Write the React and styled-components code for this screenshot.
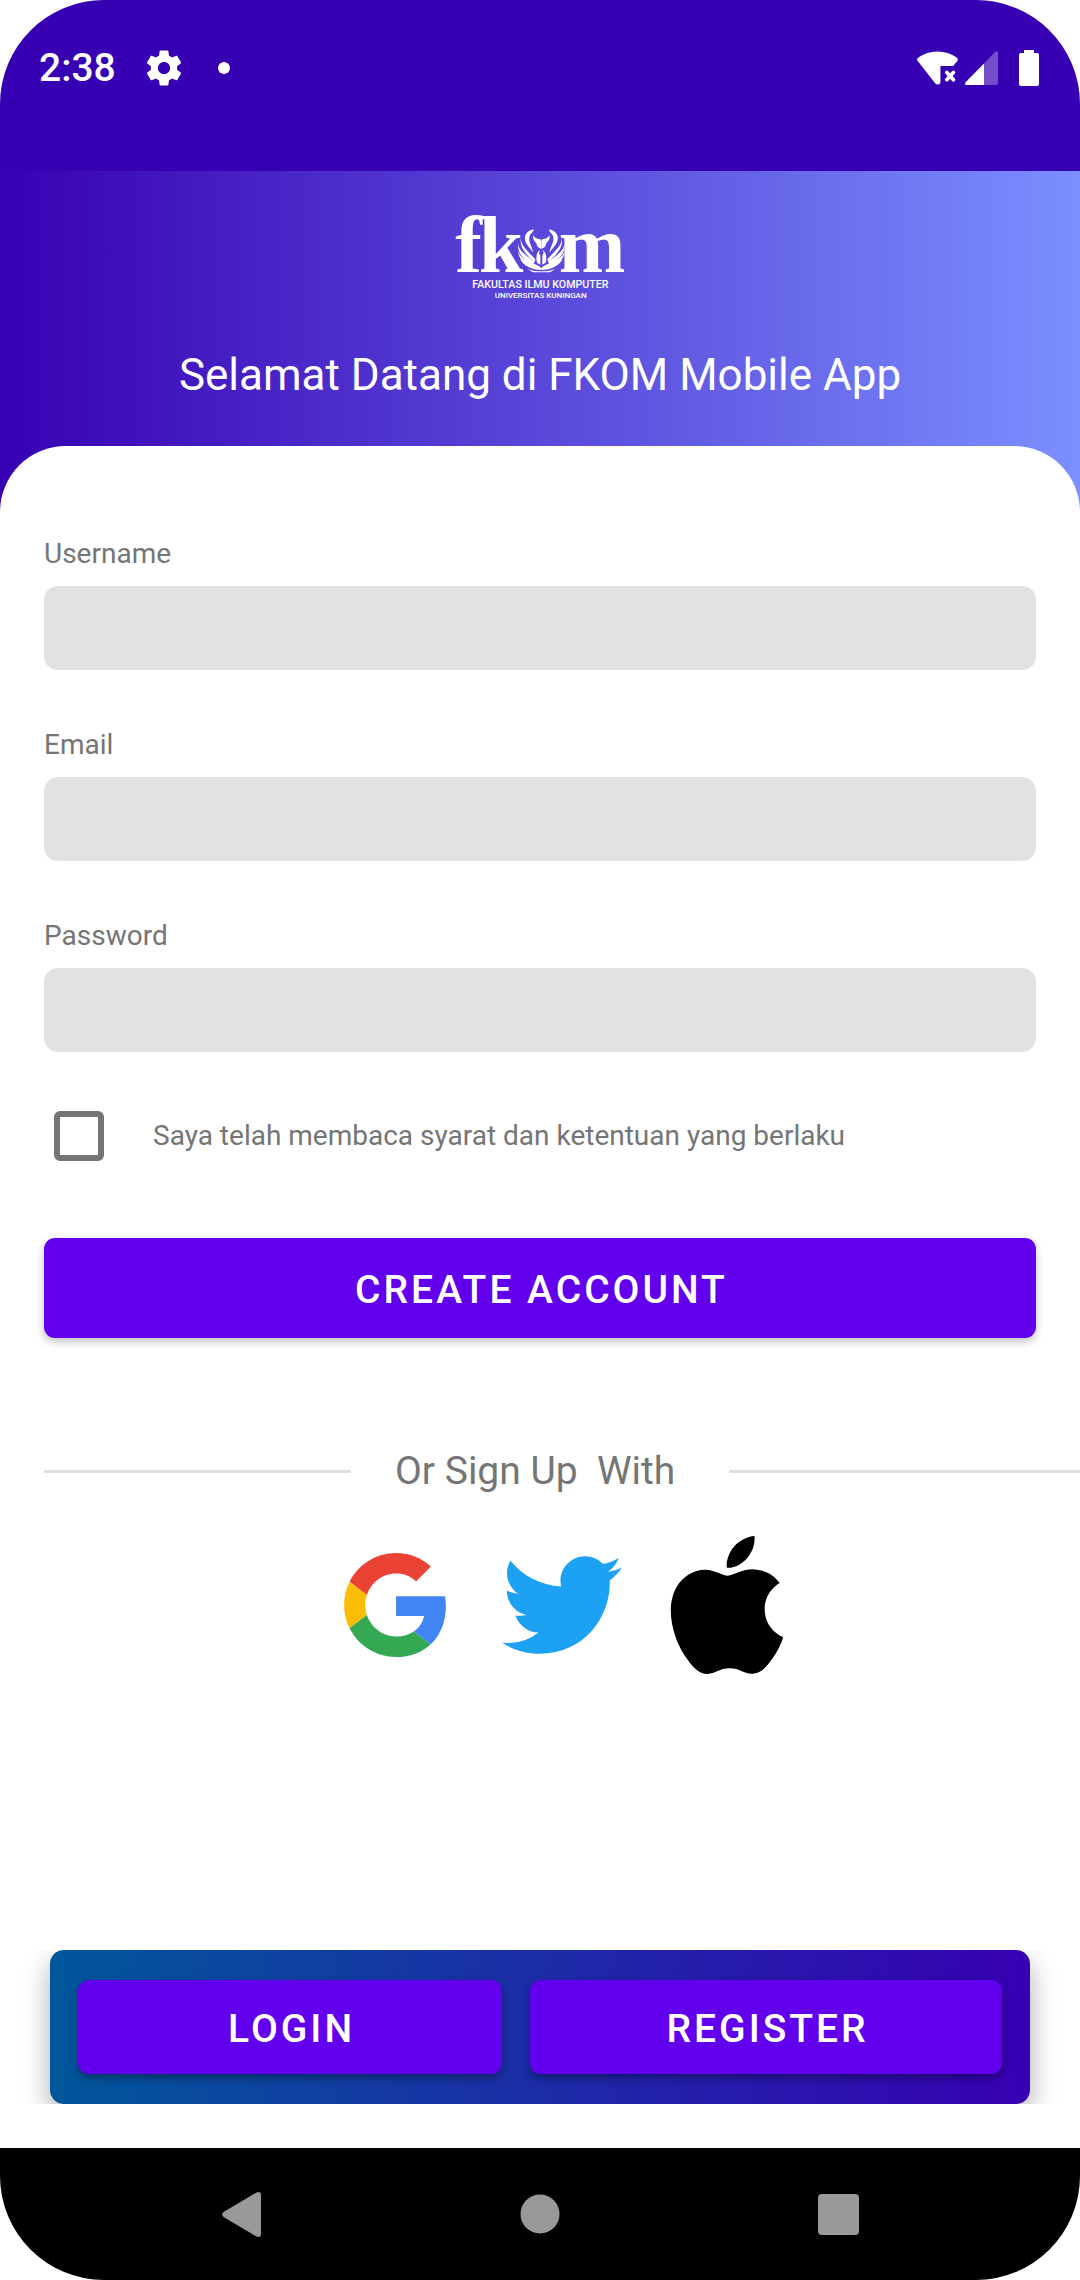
import React, { useState } from "react";
import styled, { createGlobalStyle, ThemeProvider } from "styled-components";

const theme = {
  primary: "#6200ee",
  primaryDark: "#3700b3",
  periwinkle: "#7b8fff",
  ocean: "#01579b",
  field: "#e2e2e2",
  muted: "#757575",
  rule: "#dedede",
  gutter: "44px",
  screenRadius: "104px",
};

const GlobalStyle = createGlobalStyle`
  *, *::before, *::after { box-sizing: border-box; }
  body { margin: 0; background: #fff; font-family: Roboto, "Noto Sans", sans-serif; }
  button, input { font-family: inherit; }
`;

const Screen = styled.div`
  display: flex;
  flex-direction: column;
  min-height: 100vh;
  background: #fff;
`;

const StatusBar = styled.header`
  display: flex;
  align-items: center;
  justify-content: space-between;
  padding: 0 41px 35px 39px;
  background: ${({ theme }) => theme.primaryDark};
  border-radius: ${({ theme }) => `${theme.screenRadius} ${theme.screenRadius} 0 0`};
  color: #fff;
`;

const StatusGroup = styled.div`
  display: flex;
  align-items: center;
  height: 136px;
  gap: ${({ $gap }) => $gap}px;
`;

const Clock = styled.time`
  font-size: 39px;
  font-weight: 500;
  line-height: 48px;
`;

const Notifications = styled.div`
  display: flex;
  align-items: center;
  gap: 33px;
`;

const NotificationDot = styled.span`
  width: 12px;
  height: 12px;
  border-radius: 50%;
  background: #fff;
`;

const BatterySlot = styled.span`
  display: flex;
  padding-left: 14px;
`;

const Hero = styled.section`
  display: flex;
  flex-direction: column;
  align-items: center;
  gap: 49px;
  padding: 25px 24px 111px;
  background: linear-gradient(90deg, ${({ theme }) => `${theme.primaryDark}, ${theme.periwinkle}`});
  color: #fff;
`;

const Title = styled.h1`
  margin: 0;
  font-size: 44px;
  font-weight: 400;
  line-height: 52px;
  text-align: center;
`;

const Card = styled.main`
  flex: 1;
  display: flex;
  flex-direction: column;
  margin-top: -66px;
  padding: 92px 0 44px;
  border-radius: 66px 66px 0 0;
  background: #fff;
`;

const Form = styled.form`
  display: flex;
  flex-direction: column;
  gap: 59px;
  padding: 0 ${({ theme }) => theme.gutter};
`;

const Field = styled.div`
  display: flex;
  flex-direction: column;
  gap: 16px;
`;

const Label = styled.label`
  color: ${({ theme }) => theme.muted};
  font-size: 28px;
  line-height: 32px;
`;

const TextInput = styled.input`
  width: 100%;
  height: 84px;
  padding: 0 24px;
  border: 0;
  border-radius: 14px;
  background: ${({ theme }) => theme.field};
  font-size: 32px;
`;

const Consent = styled.div`
  display: flex;
  align-items: center;
  gap: 49px;
  padding-left: 10px;
`;

const Checkbox = styled.input`
  appearance: none;
  width: 50px;
  height: 50px;
  margin: 0;
  border: 6px solid ${({ theme }) => theme.muted};
  border-radius: 6px;
  background: #fff;
  &:checked {
    border-color: ${({ theme }) => theme.primary};
    background: ${({ theme }) => theme.primary};
  }
`;

const Button = styled.button`
  flex: ${({ $grow }) => $grow || "none"};
  height: ${({ $height }) => $height}px;
  padding: 4px 0 0 3px;
  border: 0;
  border-radius: 11px;
  background: ${({ theme }) => theme.primary};
  box-shadow: 0 4px 8px rgba(0, 0, 0, ${({ $shade }) => $shade});
  color: #fff;
  font-size: 39px;
  font-weight: 500;
  letter-spacing: 3px;
  text-transform: uppercase;
`;

const FormAction = styled.div`
  display: flex;
  flex-direction: column;
  padding-top: 18px;
`;

const Divider = styled.div`
  display: flex;
  align-items: center;
  gap: 44px;
  margin-top: 110px;
  padding-left: ${({ theme }) => theme.gutter};
`;

const Rule = styled.span`
  flex: 1 1 ${({ $bleed }) => $bleed || 0}px;
  height: 3px;
  background: ${({ theme }) => theme.rule};
`;

const DividerText = styled.span`
  color: ${({ theme }) => theme.muted};
  font-size: 39px;
  line-height: 46px;
  white-space: pre;
`;

const Socials = styled.div`
  display: flex;
  align-items: center;
  justify-content: center;
  gap: 48px;
  margin-top: 42px;
  padding-left: 48px;
`;

const SocialButton = styled.button`
  display: flex;
  padding: 0 ${({ $after }) => $after || 0}px 0 0;
  border: 0;
  background: none;
`;

const SwitchBar = styled.nav`
  display: flex;
  gap: 28px;
  margin: auto 50px 0;
  padding: 30px 28px;
  border-radius: 14px;
  background: linear-gradient(90deg, ${({ theme }) => `${theme.ocean}, ${theme.primaryDark}`});
  box-shadow: 0 12px 28px rgba(0, 0, 0, 0.32);
  clip-path: inset(0 -30px 0 -30px);
`;

const SystemNav = styled.footer`
  display: grid;
  grid-template-columns: repeat(3, 1fr);
  place-items: center;
  height: 132px;
  padding: 0 92px;
  border-radius: ${({ theme }) => `0 0 ${theme.screenRadius} ${theme.screenRadius}`};
  background: #000;
`;

const SystemButton = styled.button`
  display: flex;
  padding: 0;
  border: 0;
  background: none;
`;

const GearIcon = () => (
  <svg width="42" height="42" viewBox="0 0 24 24" fill="#fff" aria-hidden="true">
    <path d="M19.43 12.98c.04-.32.07-.64.07-.98s-.03-.66-.07-.98l2.11-1.65c.19-.15.24-.42.12-.64l-2-3.46c-.12-.22-.39-.3-.61-.22l-2.49 1c-.52-.4-1.08-.73-1.69-.98l-.38-2.65C14.46 2.18 14.25 2 14 2h-4c-.25 0-.46.18-.49.42l-.38 2.65c-.61.25-1.17.59-1.69.98l-2.49-1c-.23-.09-.49 0-.61.22l-2 3.46c-.13.22-.07.49.12.64l2.11 1.65c-.04.32-.07.65-.07.98s.03.66.07.98l-2.11 1.65c-.19.15-.24.42-.12.64l2 3.46c.12.22.39.3.61.22l2.49-1c.52.4 1.08.73 1.69.98l.38 2.65c.03.24.24.42.49.42h4c.25 0 .46-.18.49-.42l.38-2.65c.61-.25 1.17-.59 1.69-.98l2.49 1c.23.09.49 0 .61-.22l2-3.46c.12-.22.07-.49-.12-.64l-2.11-1.65zM12 15.5c-1.93 0-3.5-1.57-3.5-3.5s1.57-3.5 3.5-3.5 3.5 1.57 3.5 3.5-1.57 3.5-3.5 3.5z" />
  </svg>
);

const WifiOffIcon = () => (
  <svg width="41" height="34" viewBox="0 0 42 34" fill="#fff" aria-hidden="true">
    <path d="M21 0C13.500 0 7 2.300 1.300 6.300C0 7.300 -.3 8.500 .7 9.800L18.800 32.800C20.200 34.300 24 34.300 24 31.500V15H37L41.300 9.800C42.300 8.500 42 7.300 40.700 6.300C35 2.300 28.500 0 21 0Z" />
    <path d="M30.500 21.500L37.300 29M37.300 21.500L30.500 29" stroke="#fff" strokeWidth="3.800" strokeLinecap="round" />
  </svg>
);

const SignalIcon = () => (
  <svg width="33" height="34" viewBox="0 0 33 34" fill="#fff" aria-hidden="true">
    <path opacity=".3" d="M19 12.500L30.500 .6Q33 -.5 33 2V32Q33 34 31 34H19Z" />
    <path d="M19 12.500V34H1.500Q-.7 34 .4 31.500Z" />
  </svg>
);

const BatteryIcon = () => (
  <svg width="20" height="36" viewBox="0 0 20 36" fill="#fff" aria-hidden="true">
    <path d="M5 0H15V3H18.500Q20 3 20 5V34Q20 36 18 36H2Q0 36 0 34V5Q0 3 1.500 3H5Z" />
  </svg>
);

const EmblemHalf = () => (
  <g>
    <path d="M281 88C262 92 250 106 256 124C260 136 270 144 280 158C276 138 262 122 270 106C273 100 281 96 281 88Z" />
    <path d="M243 112C240 134 260 150 286 178L284 186C262 168 236 144 243 112Z" />
    <path d="M235 132C236 152 258 166 284 186L280 192C254 182 230 160 235 132Z" />
    <path d="M234 154C240 172 258 180 282 192L278 198C256 196 236 178 234 154Z" />
    <path d="M240 178C256 182 284 188 304 204V210C274 210 252 198 240 178Z" />
    <path d="M264 207C278 213 290 214 304 214V217H282C276 216 270 213 264 207Z" />
    <path d="M279 106C284 114 292 118 301 117L304 124V146C296 146 290 138 289 130C282 124 278 116 279 106Z" />
    <path d="M300 150C290 156 287 170 291 188L301 194V168L297 158Z" />
  </g>
);

const FkomLogo = () => (
  <svg width="176" height="104" viewBox="36 -12 528 312" fill="#fff" role="img" aria-label="FKOM">
    <g fontFamily="'Liberation Serif', serif" fontWeight="700" fontSize="240">
      <text x="46" y="216">f</text>
      <text x="116" y="216">k</text>
      <text x="356" y="216">m</text>
    </g>
    <EmblemHalf />
    <g transform="translate(608 0) scale(-1 1)">
      <EmblemHalf />
    </g>
    <g fontFamily="Roboto, sans-serif" fontWeight="500" textAnchor="middle">
      <text x="301" y="265" fontSize="32">FAKULTAS ILMU KOMPUTER</text>
      <text x="302" y="294" fontSize="24">UNIVERSITAS KUNINGAN</text>
    </g>
  </svg>
);

const GoogleIcon = () => (
  <svg width="102" height="104" viewBox="0 0 47 48" aria-hidden="true">
    <path fill="#ea4335" d="M24 9.500c3.540 0 6.710 1.220 9.210 3.600l6.850-6.850C35.900 2.380 30.470 0 24 0 14.620 0 6.510 5.380 2.560 13.220l7.980 6.190C12.430 13.720 17.740 9.500 24 9.500z" />
    <path fill="#4285f4" d="M46.980 24.550c0-1.570-.15-3.090-.38-4.550H24v9.020h12.940c-.58 2.960-2.260 5.480-4.780 7.180l7.730 6c4.510-4.180 7.090-10.360 7.090-17.650z" />
    <path fill="#fbbc05" d="M10.530 28.590c-.48-1.450-.76-2.990-.76-4.590s.27-3.140.76-4.590l-7.980-6.190C.92 16.460 0 20.120 0 24c0 3.880.92 7.540 2.560 10.780l7.970-6.190z" />
    <path fill="#34a853" d="M24 48c6.480 0 11.930-2.130 15.890-5.810l-7.730-6c-2.150 1.450-4.920 2.300-8.160 2.300-6.260 0-11.570-4.220-13.470-9.910l-7.980 6.190C6.510 42.620 14.620 48 24 48z" />
  </svg>
);

const TwitterIcon = () => (
  <svg width="120" height="98" viewBox="0 48 512 416" fill="#1da1f2" aria-hidden="true">
    <path d="M459.370 151.716c.325 4.548.325 9.097.325 13.645 0 138.720-105.583 298.558-298.558 298.558-59.452 0-114.680-17.219-161.137-47.106 8.447.974 16.568 1.299 25.340 1.299 49.055 0 94.213-16.568 130.274-44.832-46.132-.975-84.792-31.188-98.112-72.772 6.498.974 12.995 1.624 19.818 1.624 9.421 0 18.843-1.300 27.614-3.573-48.081-9.747-84.143-51.980-84.143-102.985v-1.299c13.969 7.797 30.214 12.670 47.431 13.319-28.264-18.843-46.781-51.005-46.781-87.391 0-19.492 5.197-37.360 14.294-52.954 51.655 63.675 129.300 105.258 216.365 109.807-1.624-7.797-2.599-15.918-2.599-24.040 0-57.828 46.782-104.934 104.934-104.934 30.213 0 57.502 12.670 76.670 33.137 23.715-4.548 46.456-13.320 66.599-25.340-7.798 24.366-24.366 44.833-46.132 57.827 21.117-2.273 41.584-8.122 60.426-16.243-14.292 20.791-32.161 39.308-52.628 54.253z" />
  </svg>
);

const AppleIcon = () => (
  <svg width="114" height="138" viewBox="2.100 0 19.800 24" fill="#000" aria-hidden="true">
    <path d="M12.152 6.896c-.948 0-2.415-1.078-3.960-1.040-2.040.027-3.910 1.183-4.961 3.014-2.117 3.675-.546 9.103 1.519 12.090 1.013 1.454 2.208 3.090 3.792 3.039 1.520-.065 2.090-.987 3.935-.987 1.831 0 2.350.987 3.960.948 1.637-.026 2.676-1.480 3.676-2.948 1.156-1.688 1.636-3.325 1.662-3.415-.039-.013-3.182-1.221-3.220-4.857-.026-3.040 2.480-4.494 2.597-4.559-1.429-2.090-3.623-2.324-4.390-2.376-2-.156-3.675 1.090-4.610 1.090zM15.530 3.830c.843-1.012 1.400-2.427 1.245-3.830-1.207.052-2.662.805-3.532 1.818-.780.896-1.454 2.338-1.273 3.714 1.338.104 2.715-.688 3.559-1.701" />
  </svg>
);

const BackIcon = () => (
  <svg width="39" height="45" viewBox="0 0 39 45" fill="#999" aria-hidden="true">
    <path d="M1.500 20L34.500 .5Q39 -1 39 3V42Q39 46 34.500 44.500L1.500 25Q-1.200 22.500 1.500 20Z" />
  </svg>
);

const HomeIcon = () => (
  <svg width="40" height="40" viewBox="0 0 40 40" fill="#999" aria-hidden="true">
    <circle cx="20" cy="20" r="19.500" />
  </svg>
);

const RecentsIcon = () => (
  <svg width="41" height="41" viewBox="0 0 41 41" fill="#999" aria-hidden="true">
    <rect width="41" height="41" rx="4" />
  </svg>
);

const fields = [
  { id: "username", label: "Username", type: "text" },
  { id: "email", label: "Email", type: "email" },
  { id: "password", label: "Password", type: "password" },
];

export default function App() {
  const [agreed, setAgreed] = useState(false);

  return (
    <ThemeProvider theme={theme}>
      <GlobalStyle />
      <Screen>
        <StatusBar>
          <StatusGroup $gap={27}>
            <Clock>2:38</Clock>
            <Notifications>
              <GearIcon />
              <NotificationDot />
            </Notifications>
          </StatusGroup>
          <StatusGroup $gap={7}>
            <WifiOffIcon />
            <SignalIcon />
            <BatterySlot>
              <BatteryIcon />
            </BatterySlot>
          </StatusGroup>
        </StatusBar>

        <Hero>
          <FkomLogo />
          <Title>Selamat Datang di FKOM Mobile App</Title>
        </Hero>

        <Card>
          <Form onSubmit={(event) => event.preventDefault()}>
            {fields.map(({ id, label, type }) => (
              <Field key={id}>
                <Label htmlFor={id}>{label}</Label>
                <TextInput id={id} name={id} type={type} />
              </Field>
            ))}
            <Consent>
              <Checkbox
                id="terms"
                type="checkbox"
                checked={agreed}
                onChange={(event) => setAgreed(event.target.checked)}
              />
              <Label htmlFor="terms">Saya telah membaca syarat dan ketentuan yang berlaku</Label>
            </Consent>
            <FormAction>
              <Button type="submit" $height={100} $shade={0.24}>
                Create Account
              </Button>
            </FormAction>
          </Form>

          <Divider>
            <Rule />
            <DividerText>{"Or Sign Up  With "}</DividerText>
            <Rule $bleed={44} />
          </Divider>

          <Socials>
            <SocialButton type="button" aria-label="Google" $after={8}>
              <GoogleIcon />
            </SocialButton>
            <SocialButton type="button" aria-label="Twitter">
              <TwitterIcon />
            </SocialButton>
            <SocialButton type="button" aria-label="Apple">
              <AppleIcon />
            </SocialButton>
          </Socials>

          <SwitchBar>
            <Button type="button" $height={94} $grow={53} $shade={0.36}>
              Login
            </Button>
            <Button type="button" $height={94} $grow={59} $shade={0.36}>
              Register
            </Button>
          </SwitchBar>
        </Card>

        <SystemNav>
          <SystemButton type="button" aria-label="Back">
            <BackIcon />
          </SystemButton>
          <SystemButton type="button" aria-label="Home">
            <HomeIcon />
          </SystemButton>
          <SystemButton type="button" aria-label="Recents">
            <RecentsIcon />
          </SystemButton>
        </SystemNav>
      </Screen>
    </ThemeProvider>
  );
}
